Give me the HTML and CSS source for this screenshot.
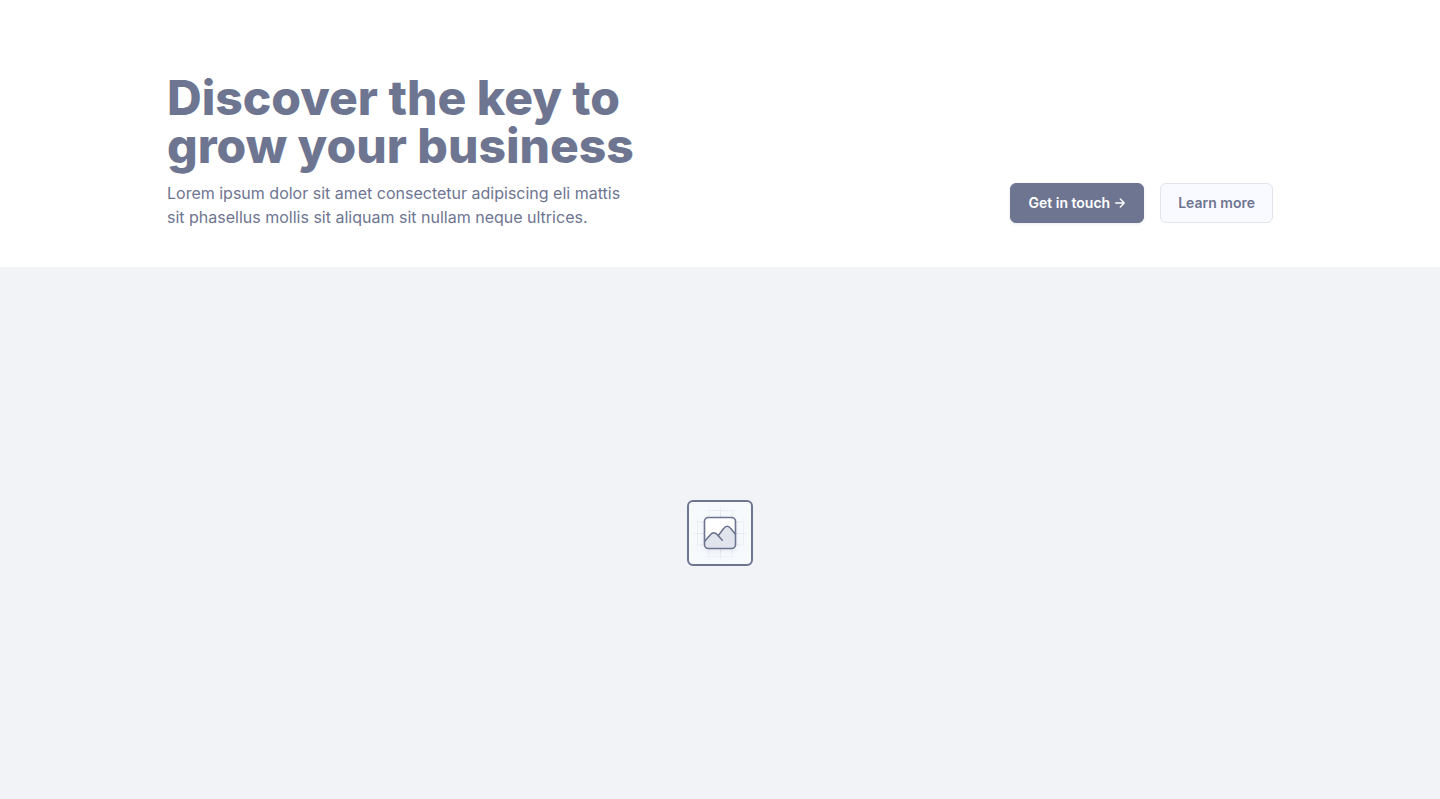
FILE: index.html
```html
<!DOCTYPE html>
<html lang="en">
<head>
<meta charset="utf-8">
<meta name="viewport" content="width=device-width, initial-scale=1">
<title>Discover the key to grow your business</title>
<link rel="stylesheet" href="styles.css">
</head>
<body>
<header class="hero">
  <div class="hero-inner">
    <div class="hero-copy">
      <h1 class="hero-title">Discover the key to grow your business</h1>
      <p class="hero-text">Lorem ipsum dolor sit amet consectetur adipiscing eli mattis sit phasellus mollis sit aliquam sit nullam neque ultrices.</p>
    </div>
    <div class="hero-actions">
      <button type="button" class="btn btn-primary">Get in touch
        <svg class="btn-arrow" width="10" height="10" viewBox="0 0 10 10" fill="none" stroke="currentColor" stroke-width="1.3" stroke-linecap="round" stroke-linejoin="round" aria-hidden="true"><path d="M.7 5H9.3M5.3 1L9.3 5L5.3 9"/></svg>
      </button>
      <button type="button" class="btn btn-secondary">Learn more</button>
    </div>
  </div>
</header>
<main class="media">
  <svg class="media-icon" width="66" height="66" viewBox="0 0 66 66" fill="none" role="img" aria-label="Image placeholder">
    <defs>
      <radialGradient id="fade" gradientUnits="userSpaceOnUse" cx="33" cy="33" r="30">
        <stop offset=".6" stop-color="#e1e4ed"/>
        <stop offset="1" stop-color="#e1e4ed" stop-opacity="0"/>
      </radialGradient>
      <clipPath id="photo"><rect x="17.5" y="17.5" width="31" height="31" rx="4"/></clipPath>
      <filter id="soft" x="-30%" y="-30%" width="160%" height="160%"><feGaussianBlur stdDeviation="2"/></filter>
    </defs>
    <rect x="1" y="1" width="64" height="64" rx="5" fill="#f6fafd" stroke="#6e7591" stroke-width="2"/>
    <path d="M10.5 5V61M22 5V61M33.5 5V61M45 5V61M56.5 5V61M5 10.5H61M5 22H61M5 33.5H61M5 45H61M5 56.5H61" stroke="url(#fade)" stroke-width="1"/>
    <rect x="17" y="19" width="32" height="32" rx="4" fill="#6e7591" opacity=".12" filter="url(#soft)"/>
    <rect x="17.5" y="17.5" width="31" height="31" rx="4" fill="#fff"/>
    <g clip-path="url(#photo)">
      <path d="M17 42L23.6 34.4C25.4 32.4 28.2 32.4 30 34.4L31.2 35.8L36.6 28.6C38.6 25.4 41.8 25.4 43.8 28.6L49 35V49H17Z" fill="#e1e4ed"/>
      <path d="M17 42L23.6 34.4C25.4 32.4 28.2 32.4 30 34.4L35.3 40.2M31.2 35.8L36.6 28.6C38.6 25.4 41.8 25.4 43.8 28.6L49 35" stroke="#6e7591" stroke-width="1.6" stroke-linecap="round" stroke-linejoin="round"/>
    </g>
    <rect x="17.5" y="17.5" width="31" height="31" rx="4" stroke="#6e7591" stroke-width="1.6"/>
  </svg>
</main>
</body>
</html>
```
FILE: styles.css
```css
*, *::before, *::after {
  box-sizing: border-box;
}

body {
  margin: 0;
  min-height: 100vh;
  display: flex;
  flex-direction: column;
  background: #fff;
  color: #6e7591;
  font-family: Inter, "Liberation Sans", sans-serif;
}

.hero {
  padding: 74px 24px 38px;
}

.hero-inner {
  display: flex;
  flex-wrap: wrap;
  align-items: flex-end;
  justify-content: space-between;
  gap: 24px;
  max-width: 1106px;
  margin: 0 auto;
}

.hero-copy {
  max-width: 472px;
}

.hero-title {
  margin: 0;
  font-size: 48px;
  line-height: 48px;
  font-weight: 800;
}

.hero-text {
  margin: 11px 0 0;
  font-size: 16px;
  line-height: 24px;
}

.hero-actions {
  display: flex;
  gap: 16px;
  padding-bottom: 6px;
}

.btn {
  display: inline-flex;
  align-items: center;
  gap: 5px;
  height: 40px;
  padding: 0 17px;
  border: 1px solid #6e7591;
  border-radius: 6px;
  font: 600 14px/20px Inter, "Liberation Sans", sans-serif;
  cursor: pointer;
}

.btn-primary {
  padding: 0 18px;
  background: #6e7591;
  color: #fff;
  box-shadow: 0 1px 3px rgba(110, 117, 145, 0.15);
}

.btn-secondary {
  background: #f8faff;
  border-color: #e1e4ed;
  color: #6e7591;
}

.media {
  flex: 1;
  display: flex;
  align-items: center;
  justify-content: center;
  background: #f1f3f7;
}
```
